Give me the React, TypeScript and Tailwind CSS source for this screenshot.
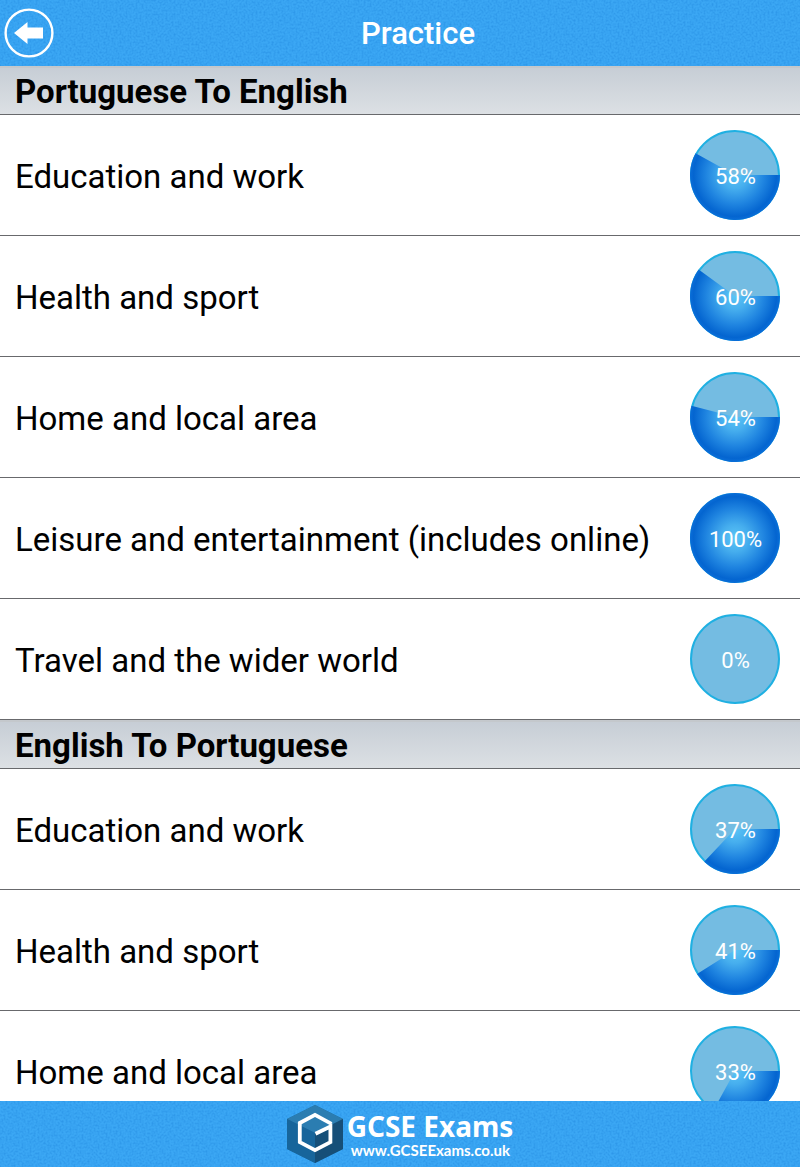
import { useId } from 'react';

type Topic = { name: string; score: number };
type Section = { title: string; topics: Topic[] };

const sections: Section[] = [
  {
    title: 'Portuguese To English',
    topics: [
      { name: 'Education and work', score: 58 },
      { name: 'Health and sport', score: 60 },
      { name: 'Home and local area', score: 54 },
      { name: 'Leisure and entertainment (includes online)', score: 100 },
      { name: 'Travel and the wider world', score: 0 },
    ],
  },
  {
    title: 'English To Portuguese',
    topics: [
      { name: 'Education and work', score: 37 },
      { name: 'Health and sport', score: 41 },
      { name: 'Home and local area', score: 33 },
    ],
  },
];

// Fine grain laid over the blue bars.
function Grain() {
  const id = useId();
  return (
    <svg className="pointer-events-none absolute inset-0 h-full w-full" aria-hidden="true">
      <filter id={id} x="0" y="0" width="100%" height="100%" colorInterpolationFilters="sRGB">
        <feTurbulence type="fractalNoise" baseFrequency="0.5" numOctaves="2" seed="4" />
        <feColorMatrix values="0 0 0 0 0.1  0 0 0 0 0.5  0 0 0 0 0.85  0.9 0 0 0 -0.34" />
      </filter>
      <rect width="100%" height="100%" filter={`url(#${id})`} />
    </svg>
  );
}

function ScorePie({ score }: { score: number }) {
  const id = useId();
  const angle = (score / 100) * 2 * Math.PI;
  const x = 45 + 45 * Math.cos(angle);
  const y = 45 + 45 * Math.sin(angle);
  return (
    <span className="relative flex size-[90px] shrink-0 items-center justify-center">
      <svg viewBox="0 0 90 90" className="absolute inset-0 size-full" aria-hidden="true">
        <defs>
          <radialGradient id={id} cx="45" cy="45" r="45" gradientUnits="userSpaceOnUse">
            <stop offset="0" stopColor="#5cc6f6" />
            <stop offset="0.3" stopColor="#46aeee" />
            <stop offset="0.65" stopColor="#1f84e0" />
            <stop offset="0.92" stopColor="#0465d0" />
            <stop offset="1" stopColor="#0a6ed8" />
          </radialGradient>
        </defs>
        <circle cx="45" cy="45" r="44" fill="#74bce2" stroke="#1fb0e2" strokeWidth="2" />
        {score >= 100 && <circle cx="45" cy="45" r="45" fill={`url(#${id})`} />}
        {score > 0 && score < 100 && (
          <path d={`M45 45H90A45 45 0 ${score > 50 ? 1 : 0} 1 ${x} ${y}Z`} fill={`url(#${id})`} />
        )}
      </svg>
      <span className="relative pt-1 pl-px text-[22px] leading-6 text-white">{score}%</span>
    </span>
  );
}

function Logo() {
  return (
    <svg viewBox="0 0 56 58" className="h-[58px] w-14 shrink-0" aria-hidden="true">
      <path d="M28 0L56 14V44L28 58L0 44V14Z" fill="#17679f" />
      <path d="M28 0L56 14L28 28L0 14Z" fill="#2b7db1" />
      <path d="M0 14L28 28V58L0 44Z" fill="#17659b" />
      <path d="M56 14L28 28V58L56 44Z" fill="#164f78" />
      <path
        d="M44.5 18.8L28 9.8L12.8 18V37.2L28 45.2L43.4 37.2V21.5L28.5 28.8"
        fill="none"
        stroke="#fff"
        strokeWidth="3.8"
      />
    </svg>
  );
}

export default function App() {
  return (
    <div className="flex h-screen flex-col bg-white font-[Roboto,sans-serif] text-black">
      <header className="relative flex h-[66px] shrink-0 items-center justify-center bg-[#3ba7f4]">
        <Grain />
        <button type="button" aria-label="Back" className="absolute left-1 size-[50px] rounded-full">
          <svg viewBox="0 0 50 50" className="size-full" aria-hidden="true">
            <circle cx="25" cy="25" r="23.4" fill="none" stroke="#fff" strokeWidth="2.4" />
            <path d="M10 25L23.5 14V19.5H39V30.5H23.5V36Z" fill="#fff" />
          </svg>
        </button>
        <h1 className="relative pt-0.5 pl-9 text-[31px] leading-9 font-medium text-white">Practice</h1>
      </header>

      <main className="min-h-0 flex-1 overflow-y-auto [scrollbar-width:none]">
        {sections.map((section) => (
          <section key={section.title}>
            <h2 className="flex h-[49px] items-center border-b border-[#68696c] bg-linear-to-b from-[#c6cdd5] to-[#dce0e4] px-[15px] pt-1 text-[33px] leading-10 font-bold shadow-[inset_0_2px_0_#c4c8cc]">
              {section.title}
            </h2>
            <ul>
              {section.topics.map((topic) => (
                <li key={topic.name} className="border-b border-[#68696c]">
                  <a href="#practice" className="flex h-[120px] items-center justify-between pr-5 pl-[15px]">
                    <span className="pt-1 text-[33px] leading-10">{topic.name}</span>
                    <ScorePie score={topic.score} />
                  </a>
                </li>
              ))}
            </ul>
          </section>
        ))}
      </main>

      <footer className="relative flex h-[66px] shrink-0 items-center justify-center bg-[#3ba7f4]">
        <Grain />
        <a href="#home" className="relative flex items-center gap-1 text-white">
          <Logo />
          <span className="flex flex-col">
            <span className="font-['Noto_Sans',sans-serif] text-[28px] leading-8 font-bold">GCSE Exams</span>
            <span className="pl-1 font-[Lato,sans-serif] text-[15px] leading-4 font-bold">www.GCSEExams.co.uk</span>
          </span>
        </a>
      </footer>
    </div>
  );
}
